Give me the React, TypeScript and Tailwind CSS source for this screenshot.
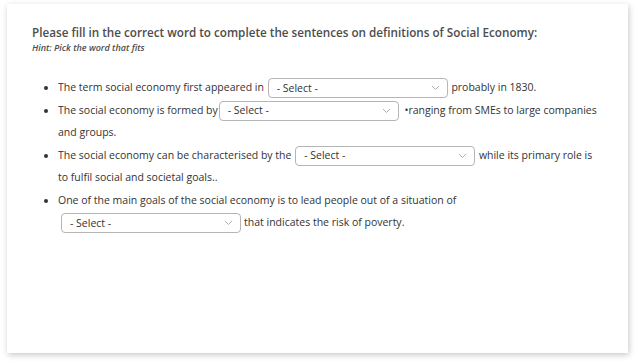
import React from "react";

function Sel({ w = 180, className = "" }: { w?: number; className?: string }) {
  return (
    <span
      className={`inline-flex items-center justify-between h-[20px] align-middle border border-[#b5b5b5] rounded-[4px] bg-white pl-[8px] pr-[7px] text-[10.5px] text-[#333] ${className}`}
      style={{ width: w }}
    >
      <span className="leading-none">- Select -</span>
      <svg width="9" height="6" viewBox="0 0 9 6" fill="none">
        <path d="M1 1l3.5 3.5L8 1" stroke="#b0b0b0" strokeWidth="1" />
      </svg>
    </span>
  );
}

export default function App() {
  return (
    <div className="w-[636px] h-[364px] bg-white pt-[4px] pl-[7px]" style={{ fontFamily: '"Open Sans", sans-serif' }}>
      <div className="w-[621px] h-[349px] bg-white shadow-[1px_2px_6px_rgba(0,0,0,0.22)] pl-[25px] pt-[20px] text-[#333]">
        <div className="text-[11.7px] font-semibold text-[#4d4d4d] leading-[17px]">
          Please fill in the correct word to complete the sentences on definitions of Social Economy:
        </div>
        <div className="text-[9px] font-semibold italic text-[#4d4d4d] leading-[12px] mt-[1px]">Hint: Pick the word that fits</div>
        <ul className="list-disc pl-[26px] mt-[22px] text-[10.5px] leading-[22.5px] w-[566px]">
          <li>
            The term social economy first appeared in <Sel className="mx-[1px]" /> probably in 1830.
          </li>
          <li>
            The social economy is formed by<Sel className="ml-[1px] mr-[3px]" /> •ranging from SMEs to large companies and groups.
          </li>
          <li>
            The social economy can be characterised by the <Sel className="mx-[1px]" /> while its primary role is to fulfil social and societal goals..
          </li>
          <li>
            One of the main goals of the social economy is to lead people out of a situation of <Sel className="ml-[3px] mr-[3px]" />that indicates the risk of poverty.
          </li>
        </ul>
      </div>
    </div>
  );
}
